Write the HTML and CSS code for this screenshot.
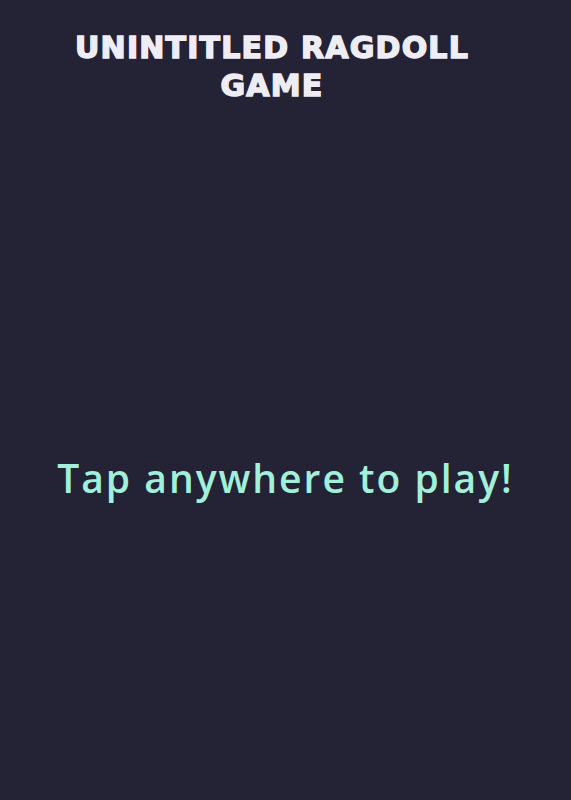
FILE: index.html
```html
<!DOCTYPE html>
<html lang="en">
<head>
<meta charset="utf-8">
<title>Unintitled Ragdoll Game</title>
<link rel="stylesheet" href="styles.css">
</head>
<body>
  <main class="screen">
    <h1 class="title">UNINTITLED RAGDOLL<br>GAME</h1>
    <p class="prompt">Tap anywhere to play!</p>
  </main>
</body>
</html>
```
FILE: styles.css
```css
html, body {
  margin: 0;
  padding: 0;
  background: #242235;
}

.screen {
  min-height: 100vh;
  display: flex;
  flex-direction: column;
  align-items: stretch;
}

.title {
  margin: 0;
  padding: 29px 27px 0 0;
  font-family: "DejaVu Sans", sans-serif;
  font-weight: 700;
  font-size: 30px;
  line-height: 38px;
  letter-spacing: 1.2px;
  text-align: center;
  color: #eeedf6;
  -webkit-text-stroke: 1.5px #eeedf6;
}

.prompt {
  margin: 353px 0 0;
  font-family: "Open Sans", sans-serif;
  font-weight: 600;
  font-size: 39px;
  line-height: 40px;
  letter-spacing: 2px;
  text-align: center;
  color: #a0f0da;
}
```
